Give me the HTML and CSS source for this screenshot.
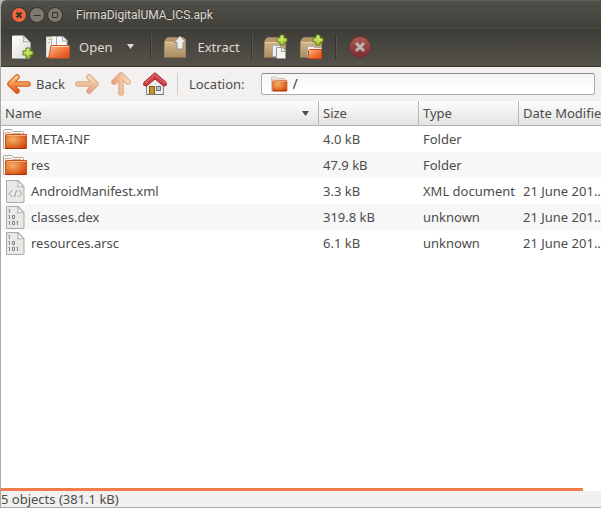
FILE: index.html
```html
<!DOCTYPE html>
<html lang="en">
<head>
<meta charset="utf-8">
<title>FirmaDigitalUMA_ICS.apk</title>
<link rel="stylesheet" href="styles.css">
</head>
<body>
<svg class="defs" aria-hidden="true">
  <defs>
    <radialGradient id="orange" cx=".35" cy=".35" r=".8"><stop offset="0" stop-color="#f0b06a"/><stop offset=".45" stop-color="#e58038"/><stop offset="1" stop-color="#cf3f0c"/></radialGradient>
    <linearGradient id="bright" x1="0" y1="0" x2="1" y2="1"><stop offset="0" stop-color="#f7c49c"/><stop offset=".5" stop-color="#ef7a42"/><stop offset="1" stop-color="#e84410"/></linearGradient>
    <linearGradient id="arrow" x1="0" y1="0" x2="0" y2="1"><stop offset="0" stop-color="#f9cd8d"/><stop offset=".6" stop-color="#ef8a3c"/><stop offset="1" stop-color="#e8581b"/></linearGradient>
    <linearGradient id="box" x1="0" y1="0" x2="0" y2="1"><stop offset="0" stop-color="#dcc198"/><stop offset="1" stop-color="#a98c62"/></linearGradient>
    <linearGradient id="paper" x1="0" y1="0" x2="1" y2="1"><stop offset="0" stop-color="#fff"/><stop offset="1" stop-color="#d6d6d4"/></linearGradient>
    <linearGradient id="green" x1="0" y1="0" x2="0" y2="1"><stop offset="0" stop-color="#e2f08c"/><stop offset="1" stop-color="#a5cc2c"/></linearGradient>
    <linearGradient id="red" x1="0" y1="0" x2="0" y2="1"><stop offset="0" stop-color="#ad5b55"/><stop offset="1" stop-color="#7d2c30"/></linearGradient>
    <symbol id="plus" viewBox="0 0 12 12"><path d="M4 1h4v3h3v4H8v3H4V8H1V4h3z" fill="url(#green)" stroke="#5b7c10"/></symbol>
    <symbol id="folder" viewBox="0 0 26 24">
      <path d="M1.500 21.500v-18q0-1 1-1h7l2 2h9q1 0 1 1v16z" fill="#f7f5f3" stroke="#aaa7a2"/>
      <path d="M3.500 19V5.500h6l1 1h9" fill="none" stroke="#e2aa8c"/>
      <path d="M4.500 7.500h20v14H3.500V8.500z" fill="url(#orange)" stroke="#c94f1c"/>
      <path d="M5 8.500h19" stroke="#f3b98c"/>
      <path d="M4 21.500h20" stroke="#a8320a"/>
    </symbol>
    <symbol id="sheet" viewBox="0 0 19 23"><path d="M.5.5h12l5.500 6v16H.5z" fill="#e8e8e7" stroke="#a9a9a7"/><path d="M11.500 1q1.500 3 0 6 3-1 6.500 0z" fill="#fff" stroke="#b0b0ae"/></symbol>
    <symbol id="binary" viewBox="0 0 19 23"><use href="#sheet"/><path d="M2.500 3.500h1V7M2.500 9.500h1V13M6.500 9.500h2v3h-2zM2.500 15.500h1V19M6.500 15.500h2v3h-2zM10.500 15.500h1V19" fill="none" stroke="#858583"/></symbol>
    <symbol id="carton" viewBox="0 0 24 22"><path d="M2.500 2.500L5 .5h15l2.500 2v18h-21V5.500z" fill="url(#box)" stroke="#a08460"/><path d="M3 2.500l2-1.500h15l2 1.500v3H2z" fill="#b7976a"/><path d="M2 5.500h20" stroke="#e7cfaa"/><path d="M3 20.500h19" stroke="#84694a"/></symbol>
  </defs>
</svg>
<div class="window">
  <header class="titlebar">
    <button class="wm close" aria-label="Close"><svg width="16" height="16"><circle cx="8" cy="8" r="7.500"/><path d="M5.500 5.500l5 5M10.500 5.500l-5 5"/></svg></button>
    <button class="wm" aria-label="Minimize"><svg width="16" height="16"><circle cx="8" cy="8" r="7.500"/><path d="M4.500 8.500h7"/></svg></button>
    <button class="wm" aria-label="Maximize"><svg width="16" height="16"><circle cx="8" cy="8" r="7.500"/><path d="M5.500 5.500h5v5h-5z"/></svg></button>
    <h1>FirmaDigitalUMA_ICS.apk</h1>
  </header>
  <div class="toolbar" role="toolbar" aria-label="Archive">
    <button aria-label="New archive" class="new"><svg width="24" height="24"><path d="M2.500 1h11L20 7v16H2.500z" fill="url(#paper)" stroke="#f5f5f3"/><path d="M13 1q2 3 0 6 3-1 7 0z" fill="#f6f6f5" stroke="#aaa"/><use href="#plus" x="12" y="12" width="12" height="12"/></svg></button>
    <button class="open"><svg width="26" height="24"><path d="M1.500 2h9v20h-9z" fill="#eee" stroke="#d8d6d0"/><path d="M3 4.500h4M3 7.500h2" stroke="#d7bb78"/><path d="M6.500 1.500h9l3 3V18h-12z" fill="#f4f4f2" stroke="#bcbab5"/><path d="M11.500 1.500h6.500l4 4V20H11.500z" fill="#fafaf9" stroke="#aaa"/><path d="M17.500 2v4h5" fill="#fff" stroke="#999"/><path d="M6 10.500h18.500l-.5 12.500H3.500z" fill="url(#bright)" stroke="#cf5a28"/><path d="M6.500 11.500h17" stroke="#fbd4b4"/></svg><span>Open</span></button>
    <button aria-label="Open recent" class="recent"><svg width="7" height="5"><path d="M0 0h7L3.500 5z" fill="#dfdbd2"/></svg></button>
    <span class="divider"></span>
    <button class="extract"><svg width="24" height="24"><use href="#carton" y="2" width="24" height="22"/><path d="M17 1l6 6.500h-3V14h-6V7.500h-3z" fill="#eee" stroke="#96928a"/></svg><span>Extract</span></button>
    <span class="divider"></span>
    <button aria-label="Add files" class="add"><svg width="26" height="25"><use href="#carton" y="3" width="24" height="22"/><path d="M9.500 11.500h7l2 2v9h-9z" fill="#eee" stroke="#aaa"/><path d="M13.500 13.500h6l3 3v8h-9z" fill="#f5f5f4" stroke="#999"/><path d="M18.500 13.500v4h4" fill="none" stroke="#999"/><use href="#plus" x="13" y="0" width="12" height="12"/></svg></button>
    <button aria-label="Add folder" class="add"><svg width="26" height="25"><use href="#carton" y="3" width="24" height="22"/><path d="M8.500 23.500v-11h6l1 1h7v10z" fill="#f6f6f6" stroke="#aaa"/><path d="M10.500 15.500h12v9H9.500v-8z" fill="url(#bright)" stroke="#d8490f"/><use href="#plus" x="13" y="0" width="12" height="12"/></svg></button>
    <span class="divider"></span>
    <button aria-label="Stop" class="stop" disabled><svg width="22" height="22"><circle cx="11" cy="11" r="10.500" fill="url(#red)" stroke="#713033"/><path d="M7 7l8 8M15 7l-8 8" stroke="#bcb5b2" stroke-width="3"/></svg></button>
  </div>
  <nav class="location" aria-label="Location">
    <button class="back"><svg width="24" height="20"><g id="left-arrow" fill="none" stroke-linecap="round" stroke-linejoin="round"><path d="M10 3L3 10l7 7M4 10h17" stroke="#c8601f" stroke-width="5.500"/><path d="M10 3L3 10l7 7M4 10h17" stroke="url(#arrow)" stroke-width="3.500"/></g></svg><span>Back</span></button>
    <button class="dim" aria-label="Forward" disabled><svg width="24" height="20"><use href="#left-arrow" transform="matrix(-1 0 0 1 24 0)"/></svg></button>
    <button class="dim up" aria-label="Up" disabled><svg width="20" height="24"><use href="#left-arrow" transform="matrix(0 1 -1 0 20 0)"/></svg></button>
    <button aria-label="Home"><svg width="24" height="24"><path d="M3.500 11L12 3.500l8.500 7.500v11.500h-17z" fill="#edeeeb" stroke="#868a85"/><path d="M6.500 14.500h5v8h-5z" fill="#c8922c" stroke="#81560d"/><path d="M13.500 14.500h4v4h-4z" fill="#b7c5d0" stroke="#66706f"/><path d="M3 22.500h18" stroke="#777"/><path d="M12 .7L.8 10.500v2.800l2.500.9L12 7l8.700 7.200 2.500-.9v-2.800z" fill="#cf4249" stroke="#98242e"/><path d="M2 10.900l10-8.500 10 8.500" fill="none" stroke="#e77b7e"/></svg></button>
    <span class="divider"></span>
    <label for="path">Location:</label>
    <div class="entry"><svg width="17" height="16" viewBox="1 1 25 22" preserveAspectRatio="none"><use href="#folder" width="26" height="24"/></svg><input id="path" type="text" value="/"></div>
  </nav>
  <main class="files">
    <table>
      <colgroup><col><col class="size"><col class="type"><col class="date"></colgroup>
      <thead><tr><th aria-sort="ascending"><div class="sorted">Name<svg width="7" height="5"><path d="M0 0h7L3.500 5z" fill="#4c4c4c"/></svg></div></th><th>Size</th><th>Type</th><th>Date Modified</th></tr></thead>
      <tbody>
        <tr><td><div class="name"><svg width="26" height="24"><use href="#folder"/></svg>META-INF</div></td><td>4.0 kB</td><td>Folder</td><td></td></tr>
        <tr><td><div class="name"><svg width="26" height="24"><use href="#folder"/></svg>res</div></td><td>47.9 kB</td><td>Folder</td><td></td></tr>
        <tr><td><div class="name"><svg class="doc" width="19" height="23"><use href="#sheet"/><path d="M6.500 10L3 13.500 6.500 17M12.500 10l3.500 3.500-3.500 3.500M10.500 10L8.500 17" fill="none" stroke="#9b9b99"/></svg>AndroidManifest.xml</div></td><td>3.3 kB</td><td>XML document</td><td>21 June 201...</td></tr>
        <tr><td><div class="name"><svg class="doc" width="19" height="23"><use href="#binary"/></svg>classes.dex</div></td><td>319.8 kB</td><td>unknown</td><td>21 June 201...</td></tr>
        <tr><td><div class="name"><svg class="doc" width="19" height="23"><use href="#binary"/></svg>resources.arsc</div></td><td>6.1 kB</td><td>unknown</td><td>21 June 201...</td></tr>
      </tbody>
    </table>
  </main>
  <div class="scroll"><div class="thumb"></div></div>
  <footer>5 objects (381.1 kB)</footer>
</div>
</body>
</html>
```
FILE: styles.css
```css
* { box-sizing: border-box; }
body {
  margin: 0;
  background: #b9b8b4;
  color: #4c4c4c;
  font: 13px/18px "Noto Sans", "Open Sans", sans-serif;
}
.defs { position: absolute; width: 0; height: 0; }
svg { display: block; flex: none; }
button {
  display: flex;
  align-items: center;
  padding: 0;
  border: 0;
  background: none;
  color: inherit;
  font: inherit;
}
.window {
  display: flex;
  flex-direction: column;
  height: 100vh;
  overflow: hidden;
  border-left: 1px solid #aaa8a4;
  border-bottom: 1px solid #aaa8a4;
  border-top-left-radius: 6px;
  background: #fff;
}
.titlebar {
  display: flex;
  align-items: center;
  gap: 2px;
  height: 28px;
  padding-left: 10px;
  border-top: 1px solid #62615a;
  background: linear-gradient(#504f48, #403f3a);
  color: #dfdbd2;
}
.titlebar h1 {
  margin: 0 0 0 11px;
  font-family: Roboto, "Noto Sans", sans-serif;
  font-size: 12px;
  font-weight: 400;
  text-shadow: 0 -1px #2a2a27;
}
.wm circle { fill: #7b7970; stroke: #35342f; }
.wm path { fill: none; stroke: #35342f; }
.wm.close circle { fill: #ee6540; }
.wm.close path { stroke-width: 2; }
.toolbar {
  display: flex;
  align-items: center;
  height: 39px;
  padding: 0 0 2px 9px;
  border-top: 1px solid #484740;
  border-bottom: 1px solid #393832;
  background: linear-gradient(#3d3c37, #55524a);
  color: #dfdbd2;
  text-shadow: 0 -1px #33322e;
}
.toolbar .divider { width: 2px; height: 24px; border-left: 1px solid #35342f; border-right: 1px solid #57554d; }
.open { margin-left: 11px; gap: 8px; }
.recent { margin: 0 16px 0 14px; }
.extract { margin: 0 11px; gap: 11px; }
.add { margin-left: 10px; }
.add + .divider { margin: 0 12px 0 10px; }
.location {
  display: flex;
  align-items: center;
  height: 34px;
  padding: 0 6px;
  background: #f2f1f0;
}
.back { gap: 5px; margin-right: 10px; }
.dim { opacity: .5; }
.dim.up { margin: 0 12px; }
.location .divider { width: 1px; height: 22px; margin: 0 11px 0 10px; background: #cfcdca; }
.entry {
  display: flex;
  flex: 1;
  align-items: center;
  gap: 5px;
  height: 22px;
  margin-left: 16px;
  padding-left: 9px;
  border: 1px solid #b0aeab;
  border-top-color: #8f8d89;
  border-radius: 3px;
  background: linear-gradient(#f4f4f4, #fff 80%);
}
.entry input {
  flex: 1;
  min-width: 0;
  padding: 0;
  border: 0;
  outline: 0;
  background: none;
  color: #3c3c3c;
  font: inherit;
  font-size: 14px;
}
.files { flex: 1; min-height: 0; overflow: hidden; }
table { width: 100%; table-layout: fixed; border-collapse: separate; border-spacing: 0; }
.size, .type { width: 100px; }
.date { width: 82px; }
th, td { padding: 0 0 0 4px; overflow: hidden; text-align: left; white-space: nowrap; }
th {
  height: 25px;
  border-right: 1px solid #bab8b4;
  border-bottom: 1px solid #b3b1ac;
  background: linear-gradient(#fdfdfd, #e3e2e0);
  font-weight: 400;
}
th:last-child { border-right: 0; }
.sorted { display: flex; align-items: center; justify-content: space-between; padding-right: 9px; }
td { height: 26px; }
td:first-child { padding-left: 1px; }
tbody tr:nth-child(even) { background: #f7f7f7; }
.name { display: flex; align-items: center; gap: 3px; }
.doc { margin: 0 3px 0 4px; }
.scroll { height: 3px; }
.thumb { width: 97%; height: 3px; background: #f47b4c; }
footer { height: 16px; background: #f1f0ee; line-height: 16px; }
```
